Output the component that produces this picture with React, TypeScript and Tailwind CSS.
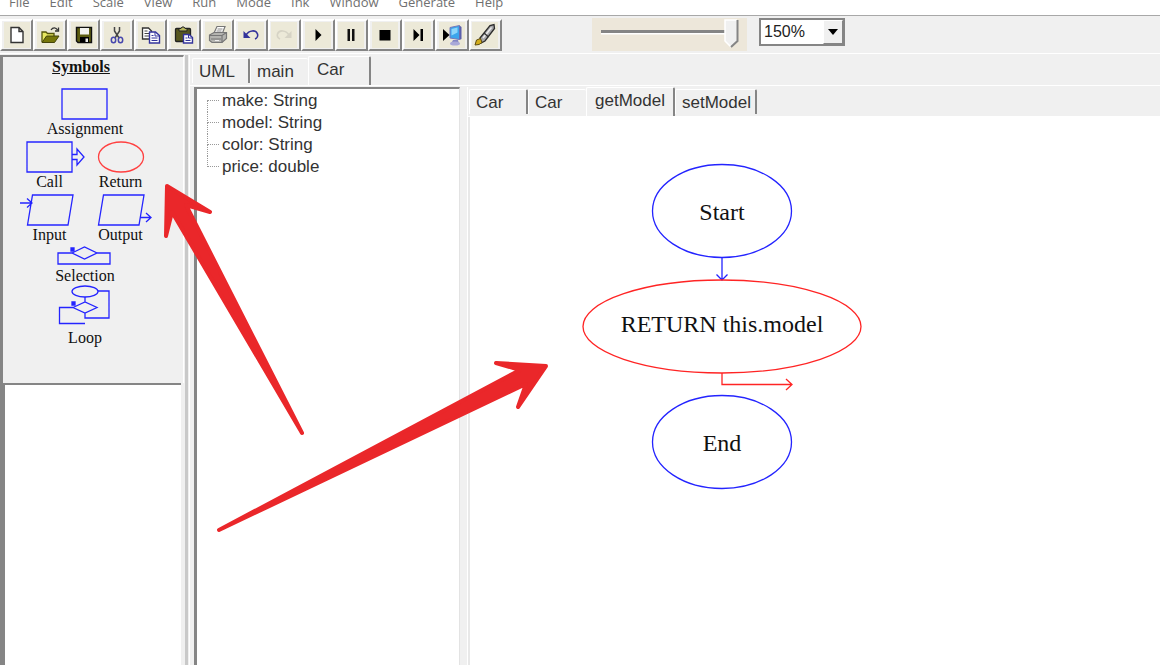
import React, { useState } from "react";

const menus = ["File", "Edit", "Scale", "View", "Run", "Mode", "Ink", "Window", "Generate", "Help"];

const tools: { name: string; icon: React.ReactNode }[] = [
  {
    name: "New",
    icon: (
      <path d="M6 4.500h8l4 4v11H6z M14 4.500v4h4" fill="#fff" stroke="#333" strokeWidth="1.400" />
    ),
  },
  {
    name: "Open",
    icon: (
      <>
        <path d="M4 19V9h4l1.500 1.500H16V13" fill="#e8e860" stroke="#55550a" strokeWidth="1.300" />
        <path d="M4 19.500 8.500 13H21l-4.500 6.500z" fill="#77770a" stroke="#44440a" />
        <path d="M13 7c2-3 5-2.500 6.500 0M20.500 4.500V8H17" fill="none" stroke="#333" strokeWidth="1.300" />
      </>
    ),
  },
  {
    name: "Save",
    icon: (
      <>
        <path d="M4.500 4.500h15v15H6l-1.500-1.500z" fill="#5c5c10" stroke="#111" strokeWidth="1.400" />
        <path d="M8 5h9v6.500H8z" fill="#f2f2ee" />
        <path d="M8 14h9v5.500H8z" fill="#000" />
        <path d="M13.500 15.500h2.500v3.500h-2.500z" fill="#eee" />
      </>
    ),
  },
  {
    name: "Cut",
    icon: (
      <>
        <path d="M9.500 4v4l4.500 7M14.500 4v4L10 15" fill="none" stroke="#444" strokeWidth="1.500" />
        <ellipse cx="8.500" cy="17" rx="2.200" ry="2.800" fill="none" stroke="#4747ad" strokeWidth="1.500" />
        <ellipse cx="15.500" cy="17" rx="2.200" ry="2.800" fill="none" stroke="#4747ad" strokeWidth="1.500" />
      </>
    ),
  },
  {
    name: "Copy",
    icon: (
      <>
        <path d="M3.500 5h6l3 3v8h-9z" fill="#fff" stroke="#333" strokeWidth="1.300" />
        <path d="M5.500 8h3M5.500 10.500h5M5.500 13h5" stroke="#444" />
        <path d="M10.500 9h6l4 3.500V20h-10z" fill="#fff" stroke="#34349c" strokeWidth="1.400" />
        <path d="M16 9v4h4M12.500 12.500h2M12.500 15h6M12.500 17.500h6" fill="none" stroke="#34349c" />
      </>
    ),
  },
  {
    name: "Paste",
    icon: (
      <>
        <rect x="3.500" y="5.500" width="15" height="13" rx="1" fill="#56561e" stroke="#222" strokeWidth="1.300" />
        <path d="M7 8V5.500h2L10 4h2l1 1.500h2V8z" fill="#b8b860" stroke="#222" />
        <path d="M11.500 11.500h5.500l3.500 3V20h-9z" fill="#fff" stroke="#34349c" strokeWidth="1.400" />
        <path d="M16.500 11.500V15h4M13.500 15h2M13.500 17.500h5" fill="none" stroke="#34349c" />
      </>
    ),
  },
  {
    name: "Print",
    icon: (
      <>
        <path d="m8 10 3-6.500h8L16.500 10" fill="#fff" stroke="#777" strokeWidth="1.200" />
        <path d="M11.500 6h5M10.500 8h5" stroke="#888" />
        <path d="M3.500 12 8 9.500h12.500v6L16 19.500H6l-2.500-2z" fill="#b4b4b0" stroke="#777" strokeWidth="1.200" />
        <path d="M3.500 12.500H16l4.500-3M16 12.500v7M5 16h10" fill="none" stroke="#777" strokeWidth="1.200" />
        <path d="M9 17.500h4" stroke="#eee" />
      </>
    ),
  },
  {
    name: "Undo",
    icon: (
      <>
        <path d="M7 12c3-5 10-5.500 11.500-1 .600 2-.500 4.300-2.500 5" fill="none" stroke="#33339b" strokeWidth="1.600" />
        <path d="M4.500 8v7h7z" fill="#33339b" />
      </>
    ),
  },
  {
    name: "Redo",
    icon: (
      <>
        <path d="M17 12C14 7 7 6.500 5.500 11c-.600 2 .500 4 2.500 5" fill="none" stroke="#d6d3c5" strokeWidth="1.600" />
        <path d="M19.500 8v7h-7z" fill="#d6d3c5" />
      </>
    ),
  },
  { name: "Play", icon: <path d="M9.500 6v12l6-6z" fill="#000" /> },
  { name: "Pause", icon: <path d="M8.500 6H11v12H8.500zM13 6h2.500v12H13z" fill="#111" /> },
  { name: "Stop", icon: <path d="M6.500 7h11v10.500h-11z" fill="#000" /> },
  { name: "Step", icon: <path d="M7.500 6v12l6-6zM14.500 6H17v12h-2.500z" fill="#000" /> },
  {
    name: "Compile",
    icon: (
      <>
        <path d="M13 17h5l1 4h-8z" fill="#8486c4" />
        <ellipse cx="15" cy="20.500" rx="5" ry="2" fill="#a9a9d8" />
        <path d="M10 4.500 19.500 2.500v14L10 15z" fill="#3ba5ec" stroke="#7678b8" />
        <path d="M11.500 6 17.500 4.500v5l-6 3z" fill="#8ed6fa" />
        <path d="M19.500 2.500 21.500 4v12l-2 1z" fill="#5b5fac" />
        <path d="M3 6v12l6.500-6z" fill="#000" />
      </>
    ),
  },
  {
    name: "Pen",
    icon: (
      <>
        <path d="M7 15 17 2.500l4-1 .500 4L12 18l-4 2z" fill="#a6a6aa" stroke="#2c2c2c" strokeWidth="1.300" />
        <path d="m10 15 8.500-10.500" stroke="#ececec" strokeWidth="1.500" />
        <path d="m11 10 4.500 4" stroke="#333" strokeWidth="1.300" />
        <path d="m2 22 1.500-5 4-1.500 1.500 4L6 21.500z" fill="#d3ad1c" stroke="#5e4c10" />
      </>
    ),
  },
];

function Toolbar() {
  const [speed, setSpeed] = useState(100);
  return (
    <div className="flex shrink-0 items-start pt-0.5 pb-0.5">
      <div className="flex w-[502px] shrink-0 pt-px">
        {tools.map((t) => (
          <button
            key={t.name}
            aria-label={t.name}
            className="flex h-8 flex-1 items-center justify-center border-2 border-t-white border-r-[#858585] border-b-[#858585] border-l-white bg-[#f0f0f0]"
          >
            <span className="flex h-[26px] w-[26px] items-center justify-center bg-[#ece9d8]">
              <svg viewBox="0 0 24 24" className="h-6 w-6">{t.icon}</svg>
            </span>
          </button>
        ))}
      </div>
      <label className="relative ml-[90px] block h-[33px] w-[155px] shrink-0 bg-[#ede7da]">
        <svg viewBox="0 0 155 32" className="block h-8 w-[155px]" fill="none">
          <path d="M9 15.500h134" stroke="#fff" strokeWidth="2" />
          <path d="M9 13.500h125" stroke="#858585" strokeWidth="3" />
          <path d="M133 2h12v21l-6 6-6-6z" fill="#f0f0f0" />
          <path d="M139 29l-6-6V2h12" stroke="#fff" strokeWidth="1.500" />
          <path d="M145.500 2v21l-6.500 6" stroke="#858585" strokeWidth="2" />
        </svg>
        <input
          type="range"
          aria-label="Speed"
          value={speed}
          onChange={(e) => setSpeed(Number(e.target.value))}
          className="absolute inset-0 h-full w-full opacity-0"
        />
      </label>
      <div className="relative ml-3 h-7 w-[86px] shrink-0">
        <select
          aria-label="Zoom"
          defaultValue="150%"
          className="h-7 w-full appearance-none border-2 border-[#858585] bg-white pl-[3px] font-[Liberation_Sans,sans-serif] text-base leading-6 text-[#222]"
        >
          <option>100%</option>
          <option>150%</option>
          <option>200%</option>
        </select>
        <span className="pointer-events-none absolute top-0.5 right-0.5 flex h-6 w-5 items-center justify-center border border-t-white border-r-[#858585] border-b-[#858585] border-l-white bg-[#f0f0f0]">
          <svg viewBox="0 0 10 6" className="h-[6px] w-[10px]"><path d="M0 0h10L5 6z" fill="#000" /></svg>
        </span>
      </div>
    </div>
  );
}

function Symbol({ label, wide, height, children }: { label: string; wide?: boolean; height: string; children: React.ReactNode }) {
  return (
    <button className={`flex flex-col items-center leading-[18px] ${wide ? "col-span-2" : ""}`}>
      <svg className={`w-[71px] ${height}`} fill="none" stroke="#2424ff" strokeWidth="1.300">
        {children}
      </svg>
      <span>{label}</span>
    </button>
  );
}

function Symbols() {
  return (
    <section className="h-[328px] shrink-0 border-t-2 border-r border-t-[#858585] border-r-white pl-[11px] font-[Liberation_Serif,serif] text-base text-[#111]">
      <div className="w-[142px]">
        <h2 className="h-5 pr-2 text-center leading-5 font-bold underline">Symbols</h2>
        <div className="mt-[11px] grid grid-cols-2 gap-y-[3px]">
          <Symbol label="Assignment" wide height="h-8">
            <path d="M12 1h45v30H12z" />
          </Symbol>
          <Symbol label="Call" height="h-8">
            <path d="M13 1h45v30H13zM58 13.500h5V8l7 8-7 8v-5.500h-5" />
          </Symbol>
          <Symbol label="Return" height="h-8">
            <ellipse cx="36" cy="16" rx="22.500" ry="15" stroke="#ff4040" />
          </Symbol>
          <Symbol label="Input" height="h-8">
            <path d="M18.500 1H59l-5 30H13.500zM6 9h12M13 4.500l5 4.500-5 4.500" />
          </Symbol>
          <Symbol label="Output" height="h-8">
            <path d="M18.500 1H59l-5 30H13.500zM55 23.500h11M61 19l5 4.500-5 4.500" />
          </Symbol>
        </div>
        <div className="grid grid-cols-2 pt-px">
          <Symbol label="Selection" wide height="h-[22px]">
            <path d="m22 8 12.500-6L47 8l-12.500 6zM22 8H8v11h52V8H47" />
            <path d="M21 3h3v3h-3z" fill="#2424ff" />
          </Symbol>
          <Symbol label="Loop" wide height="h-[44px]">
            <ellipse cx="35" cy="6.500" rx="13" ry="5.500" />
            <path d="M48 6h11v27H35v-5M35 12v5M23 22.500 35 17l12 5.500L35 28zM23 22.500H9.500v16H35" />
            <path d="M22 17h3v3h-3z" fill="#2424ff" />
          </Symbol>
        </div>
      </div>
    </section>
  );
}

function Tab({ label, width, active, edge, onClick }: { label: string; width: string; active: boolean; edge: boolean; onClick: () => void }) {
  return (
    <button
      role="tab"
      aria-selected={active}
      onClick={onClick}
      className={`${width} shrink-0 rounded-t-xs border-t border-l border-t-white border-l-white bg-[#f0f0f0] text-left ${
        active ? "h-[29px] pb-1 pl-2" : "mb-0.5 h-[25px] pl-1.5"
      } ${edge ? "border-r-2 border-r-[#858585]" : ""}`}
    >
      {label}
    </button>
  );
}

function OuterTabs() {
  const [active, setActive] = useState(2);
  return (
    <div role="tablist" className="flex h-[31px] shrink-0 items-end border-b border-white pl-0.5">
      <Tab label="UML" width="w-[58px]" active={active === 0} edge onClick={() => setActive(0)} />
      <Tab label="main" width="w-[58px]" active={active === 1} edge={false} onClick={() => setActive(1)} />
      <Tab label="Car" width="w-[63px]" active={active === 2} edge onClick={() => setActive(2)} />
    </div>
  );
}

function MethodTabs() {
  const [active, setActive] = useState(2);
  return (
    <div role="tablist" className="flex h-[30px] shrink-0 items-end border-b border-white pl-px">
      <Tab label="Car" width="w-[59px]" active={active === 0} edge onClick={() => setActive(0)} />
      <Tab label="Car" width="w-[58px]" active={active === 1} edge={false} onClick={() => setActive(1)} />
      <Tab label="getModel" width="w-[89px]" active={active === 2} edge onClick={() => setActive(2)} />
      <Tab label="setModel" width="w-[82px]" active={active === 3} edge onClick={() => setActive(3)} />
    </div>
  );
}

const fields = ["make: String", "model: String", "color: String", "price: double"];

function FieldTree() {
  return (
    <div className="w-[266px] shrink-0 border-t-2 border-r border-l-3 border-t-[#858585] border-r-[#e3e3e3] border-l-[#858585] bg-white">
      <ul className="pt-px">
        {fields.map((f, i) => (
          <li key={f} className="flex h-[22px] items-center">
            <span className="ml-2.5 flex h-[22px] w-3 flex-col">
              <span className={`h-[11px] border-b border-dotted border-[#999] ${i > 0 ? "border-l" : ""}`} />
              <span className={`h-[11px] border-dotted border-[#999] ${i < fields.length - 1 ? "border-l" : ""}`} />
            </span>
            <span className="ml-[3px] leading-[22px]">{f}</span>
          </li>
        ))}
      </ul>
    </div>
  );
}

function Flowchart() {
  return (
    <div className="relative min-h-0 flex-1 overflow-hidden border-l-2 border-[#e8e8e8] bg-white font-[Liberation_Serif,serif] text-2xl text-[#111]">
      <svg className="absolute top-[45px] left-[110px] h-[332px] w-[284px]" fill="none" stroke="#2424ff" strokeWidth="1.300">
        <ellipse cx="142" cy="49" rx="69.500" ry="46.500" />
        <path d="M142 95.500V117M136.500 112.500l5.500 5.500 5.500-5.500" />
        <ellipse cx="142" cy="280" rx="69.500" ry="46.500" />
        <g stroke="#ff2424">
          <ellipse cx="142" cy="164.500" rx="139" ry="46.500" />
          <path d="M142 211v11.500h69M206 217l6 5.500-6 5.500" />
        </g>
      </svg>
      <span className="absolute top-[79px] left-[182px] w-[140px] text-center leading-8">Start</span>
      <span className="absolute top-[191px] left-[112px] w-[280px] text-center leading-8">RETURN this.model</span>
      <span className="absolute top-[310px] left-[182px] w-[140px] text-center leading-8">End</span>
    </div>
  );
}

export default function App() {
  return (
    <div className="relative flex h-screen flex-col overflow-hidden bg-[#f0f0f0] font-[Liberation_Sans,sans-serif] text-[17px] text-[#333]">
      <nav className="flex h-4 shrink-0 items-end gap-5 overflow-hidden border-b border-[#a8a8a8] bg-white pb-[3px] pl-[9px] font-[Open_Sans,sans-serif] text-[13px] leading-5 text-[#707070]">
        {menus.map((m) => (
          <button key={m} className="shrink-0">{m}</button>
        ))}
      </nav>
      <Toolbar />
      <main className="flex min-h-0 flex-1 border-t border-white pt-px">
        <aside className="flex w-[184px] shrink-0 flex-col border-l-3 border-[#858585]">
          <Symbols />
          <div className="mr-[3px] flex-1 border-t-2 border-l-2 border-[#858585] bg-white" />
        </aside>
        <div className="ml-px w-[3px] shrink-0 bg-[#c9c9c9]" />
        <div className="ml-px flex min-w-0 flex-1 flex-col border-l border-white">
          <OuterTabs />
          <div className="flex min-h-0 flex-1 pt-px pl-1">
            <FieldTree />
            <div className="ml-[7px] flex min-w-0 flex-1 flex-col border-l border-white">
              <MethodTabs />
              <Flowchart />
            </div>
          </div>
        </div>
      </main>
      <svg className="pointer-events-none absolute top-0 left-0 h-[540px] w-[560px]" fill="#ea272a" stroke="#ea272a" strokeWidth="4" strokeLinejoin="round" aria-hidden="true">
        <path d="M167 186l43 26-24-7 116 228L172 212l-6 24z" />
        <path d="M219 530 520 370l-24-7 50 3-28 41 8-23z" />
      </svg>
    </div>
  );
}
